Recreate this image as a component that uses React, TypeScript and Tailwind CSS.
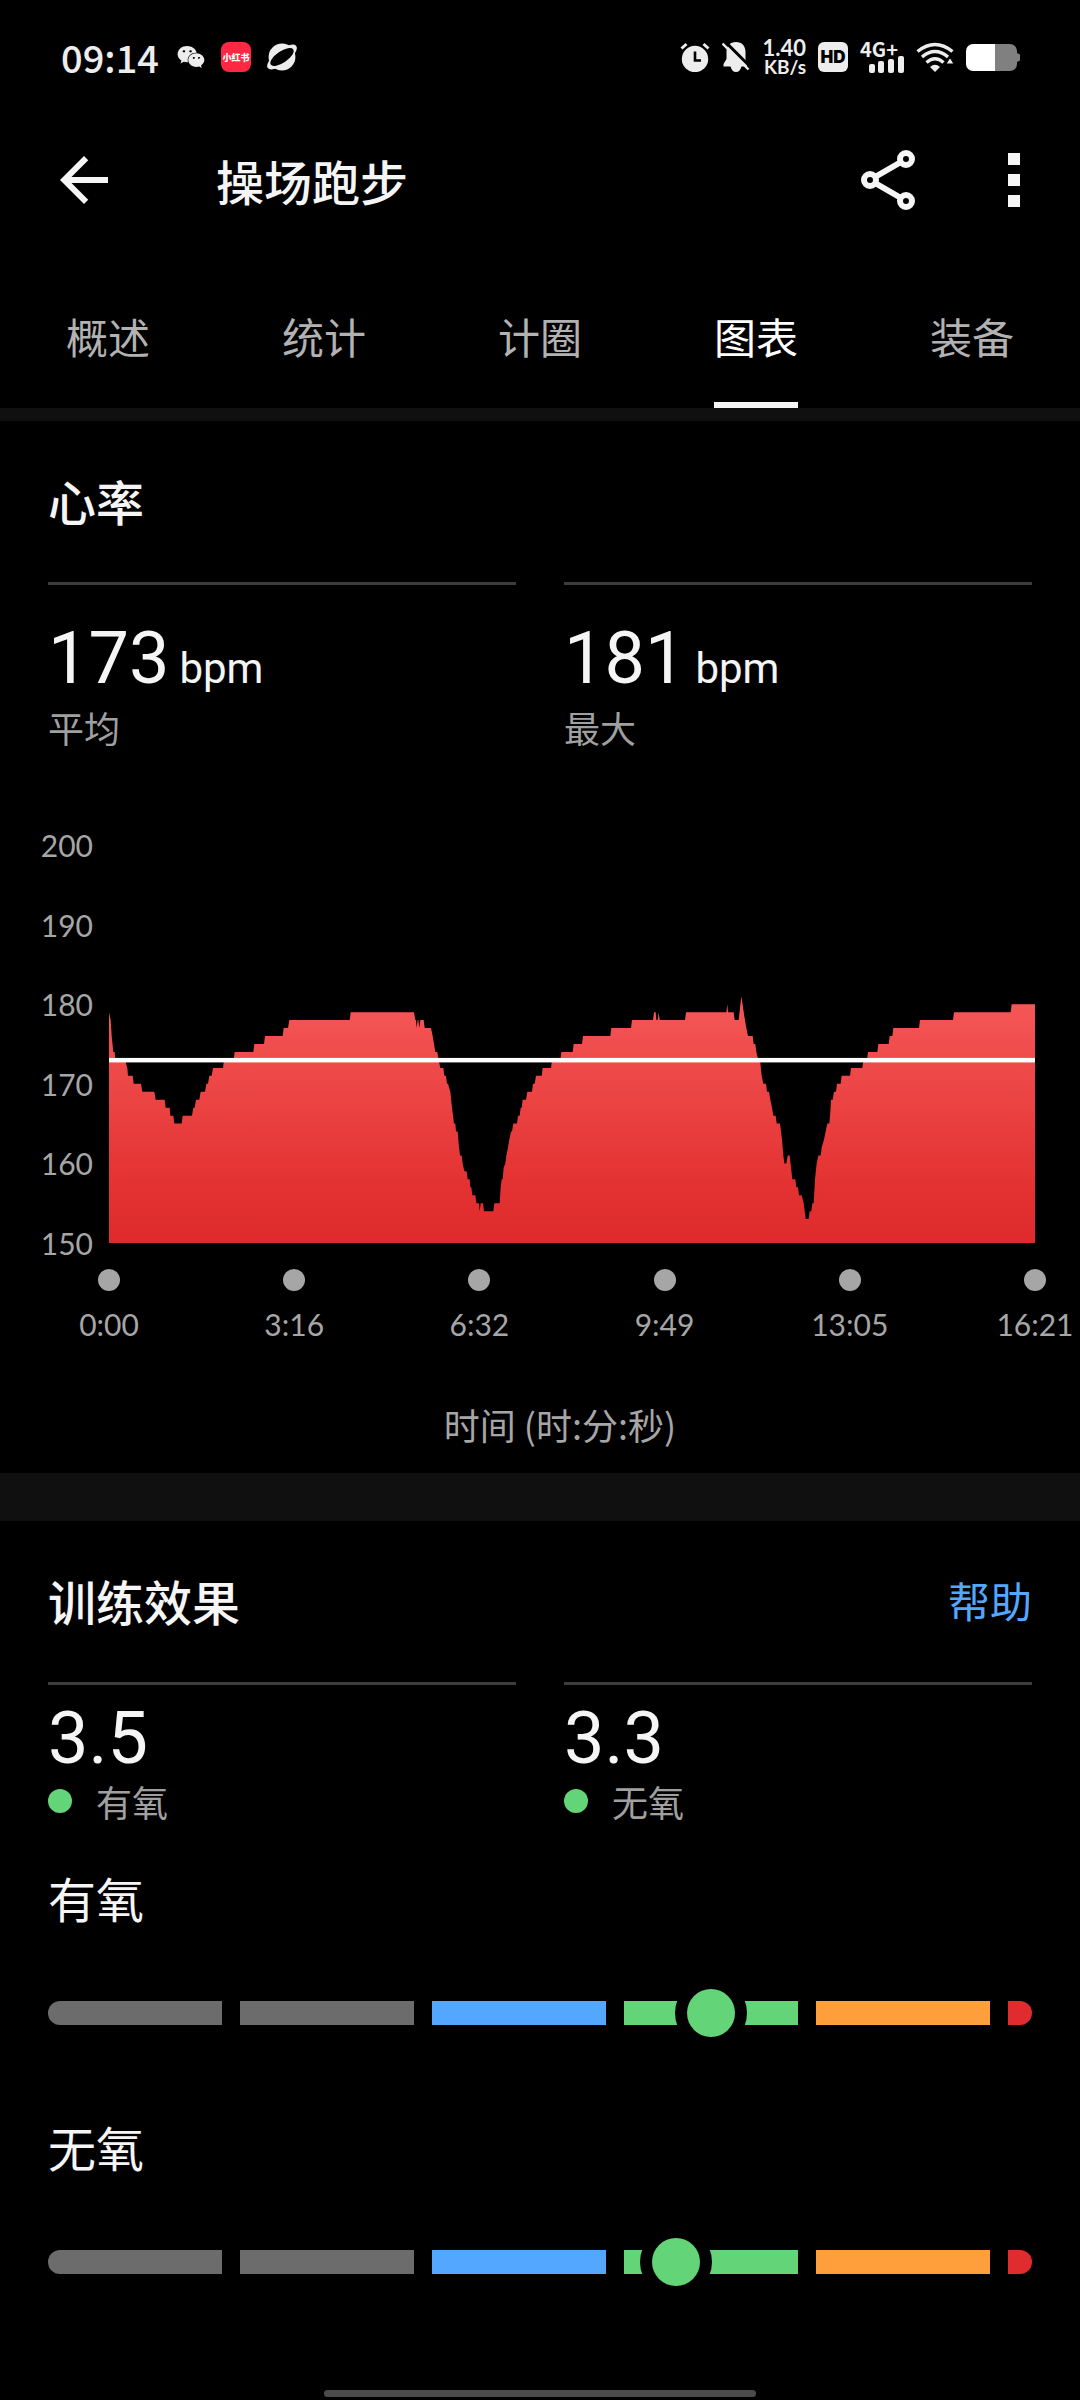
import React, { useState } from "react";
import { FaWeixin } from "react-icons/fa";
import { MdArrowBack } from "react-icons/md";

interface TickLabel {
  time: string;
}

interface StatProps {
  value: string;
  unit?: string;
  label: string;
}

interface EffectProps {
  title: string;
  value: number;
}

const TABS = ["概述", "统计", "计圈", "图表", "装备"];
const BPM_TICKS = [200, 190, 180, 170, 160, 150];
const TIME_TICKS: TickLabel[] = [
  { time: "0:00" },
  { time: "3:16" },
  { time: "6:32" },
  { time: "9:49" },
  { time: "13:05" },
  { time: "16:21" },
];

const MIN_BPM = 150;
const MAX_BPM = 200;
const AVG_BPM = 173;
const CHART_W = 2778;
const CHART_H = 398;

// [offset, bpm]
const HEART_RATE: [number, number][] = [
  [0, 179], [5, 178], [8, 176], [13, 174], [17, 174], [19, 173], [48, 173], [55, 172], [57, 171], [71, 171],
  [74, 170], [96, 170], [100, 169], [136, 169], [140, 168], [167, 168], [170, 167], [182, 167], [184, 166], [193, 166],
  [196, 165], [218, 165], [221, 166], [249, 166], [253, 167], [257, 167], [261, 168], [271, 168], [275, 169], [288, 169],
  [292, 170], [297, 170], [301, 171], [308, 171], [312, 172], [342, 172], [345, 173], [374, 173], [377, 174], [433, 174],
  [436, 175], [465, 175], [468, 176], [521, 176], [524, 177], [537, 177], [541, 178], [722, 178], [725, 179], [915, 179],
  [919, 178], [921, 178], [923, 177], [926, 178], [928, 178], [931, 177], [934, 178], [944, 178], [947, 177], [966, 177],
  [971, 176], [975, 175], [979, 174], [985, 174], [989, 173], [994, 172], [1003, 172], [1006, 171], [1011, 171], [1014, 170],
  [1017, 170], [1024, 169], [1029, 167], [1032, 166], [1035, 165], [1039, 165], [1041, 164], [1046, 164], [1049, 162.5], [1053, 161],
  [1058, 161], [1061, 160], [1066, 159], [1073, 159], [1076, 158], [1082, 158], [1084, 157], [1087, 157], [1090, 156], [1099, 156],
  [1102, 155], [1110, 155], [1112, 154], [1115, 155], [1122, 155], [1125, 154], [1153, 154], [1156, 155], [1172, 155], [1175, 157],
  [1178, 158], [1181, 158], [1184, 159.5], [1189, 160], [1192, 161], [1197, 162], [1201, 163], [1206, 164], [1209, 164], [1213, 165],
  [1224, 165], [1227, 166], [1232, 166], [1235, 167], [1238, 167], [1241, 168], [1251, 168], [1255, 169], [1269, 169], [1272, 170],
  [1277, 170], [1281, 171], [1298, 171], [1301, 172], [1326, 172], [1329, 173], [1354, 173], [1357, 174], [1391, 174], [1394, 175],
  [1419, 175], [1422, 176], [1504, 176], [1507, 177], [1566, 177], [1569, 178], [1632, 178], [1635, 179], [1640, 179], [1642, 178],
  [1646, 178], [1649, 179], [1652, 178], [1728, 178], [1731, 179], [1852, 179], [1855, 180], [1857, 179], [1874, 179], [1877, 178],
  [1889, 178], [1897, 181], [1906, 178.5], [1912, 177], [1917, 176], [1931, 176], [1934, 175], [1939, 175], [1942, 174], [1948, 173],
  [1953, 173], [1958, 171], [1963, 170], [1971, 170], [1974, 169], [1980, 169], [1984, 168], [1989, 167], [1993, 166], [2000, 166],
  [2003, 165], [2013, 165], [2019, 163], [2023, 161], [2026, 160], [2032, 160], [2036, 161], [2042, 161], [2046, 159.5], [2050, 158],
  [2059, 158], [2062, 157], [2067, 157], [2070, 156], [2078, 156], [2084, 155], [2090, 153], [2099, 153], [2102, 154], [2107, 154],
  [2110, 155], [2114, 155], [2118, 158], [2123, 160], [2128, 161], [2135, 161], [2138, 162], [2145, 163], [2150, 164], [2155, 165],
  [2161, 165], [2164, 166.5], [2166, 168], [2171, 168], [2175, 169], [2181, 169], [2184, 170], [2195, 170], [2198, 171], [2223, 171],
  [2226, 172], [2260, 172], [2263, 173], [2274, 173], [2277, 174], [2305, 174], [2308, 175], [2339, 175], [2342, 176], [2350, 176],
  [2353, 177], [2430, 177], [2433, 178], [2532, 178], [2535, 179], [2705, 179], [2708, 180], [2778, 180],
];

const bpmToY = (bpm: number) => ((MAX_BPM - bpm) / (MAX_BPM - MIN_BPM)) * CHART_H;

const areaPath = `M0 ${CHART_H} ${HEART_RATE.map(([x, bpm]) => `L${x} ${bpmToY(bpm)}`).join(" ")} L${CHART_W} ${CHART_H} Z`;

const StatusBar: React.FC = () => (
  <div className="flex h-[114px] items-center justify-between pl-[61px] pr-[60px] text-[#ededed]">
    <div className="flex items-center gap-4">
      <span className="mr-0.5 text-[38px] font-medium leading-[38px]">09:14</span>
      <FaWeixin className="h-7 w-7" />
      <span className="flex h-[30px] w-[30px] items-center justify-center rounded-lg bg-[#ff2842] text-[9px] font-black leading-none text-white">
        小红书
      </span>
      <svg className="h-[30px] w-[30px]" viewBox="0 0 30 30">
        <circle cx="15" cy="15" r="13.4" fill="currentColor" />
        <ellipse cx="15" cy="15" rx="18" ry="7" fill="currentColor" transform="rotate(-38 15 15)" />
        <ellipse cx="15" cy="15" rx="13.6" ry="5.6" fill="#000" transform="rotate(-34 15 15)" />
      </svg>
    </div>

    <div className="flex items-center gap-3">
      <svg className="h-[30px] w-[30px]" viewBox="0 0 30 30">
        <circle cx="15" cy="17" r="13.2" fill="currentColor" />
        <path d="M1.5 6.5 6.5 2M28.5 6.5 23.5 2" stroke="currentColor" strokeWidth="3" />
        <path d="M15 9.5V18.5H21" fill="none" stroke="#000" strokeWidth="2.6" />
      </svg>
      <svg className="h-[30px] w-7" viewBox="0 0 28 30">
        <path d="M14 0C8 0 4.500 4 4.500 10v7L1.500 22v2.500h7C9.500 28 11 30 14 30s4.500-2 5.500-5.500H25V22l-1.500-3V10C23.500 4 20 0 14 0Z" fill="currentColor" />
        <path d="M2 -1.500 30 26.500" stroke="#000" strokeWidth="3" />
        <path d="M.5 1.500 26.500 27.500" stroke="currentColor" strokeWidth="2.400" />
      </svg>
      <div className="flex w-11 flex-col items-end font-['Lato',sans-serif] font-bold">
        <span className="text-[22px] leading-[19px]">1.40</span>
        <span className="text-[19px] leading-[19px]">KB/s</span>
      </div>
      <span className="flex h-[30px] w-[30px] items-center justify-center rounded-md bg-[#ededed] font-['Inter',sans-serif] text-[17px] font-black leading-none text-black">
        HD
      </span>
      <div className="flex w-11 flex-col">
        <span className="text-[20px] font-bold leading-[15px]">4G+</span>
        <svg className="h-[17px] w-9 self-end" viewBox="0 0 36 17">
          <rect x="1" y="8" width="6" height="9" rx="2" fill="currentColor" />
          <rect x="10" y="5" width="6" height="12" rx="2" fill="currentColor" />
          <rect x="20" y="3" width="6" height="14" rx="2" fill="currentColor" />
          <rect x="30" y="0" width="6" height="17" rx="2" fill="currentColor" />
        </svg>
      </div>
      <svg className="h-[30px] w-[38px]" viewBox="0 0 38 30">
        <g fill="none" stroke="currentColor" strokeWidth="3.4">
          <path d="M1.500 9.500Q19 -4.500 36.500 9.500" />
          <path d="M6 15Q19 4 32 15" />
          <path d="M10.500 20.500Q19 13 27.500 20.500" />
        </g>
        <path d="M14 25Q19 20.500 24 25L19 30Z" fill="currentColor" />
        <path d="M34 15.500 38 22H30Z" fill="currentColor" stroke="#000" strokeWidth="1" />
      </svg>
      <svg className="h-[27px] w-[54px]" viewBox="0 0 54 27">
        <path d="M29 0H44a7 7 0 0 1 7 7v2l3 1.500v6L51 18v2a7 7 0 0 1-7 7H29Z" fill="#808080" />
        <path d="M7 0H29V27H7a7 7 0 0 1-7-7V7a7 7 0 0 1 7-7Z" fill="#fff" />
      </svg>
    </div>
  </div>
);

const Stat: React.FC<StatProps> = ({ value, unit, label }) => (
  <div className="flex-1 border-t-3 border-[#3c3c3c] pt-[38px]">
    <p className="font-['Roboto',sans-serif] text-[72px] leading-[72px]">
      {value}
      <span className="ml-2.5 text-[42px] leading-none">{unit}</span>
    </p>
    <p className="mt-[14px] text-4xl leading-9 text-[#a0a0a0]">{label}</p>
  </div>
);

const EffectStat: React.FC<StatProps> = ({ value, label }) => (
  <div className="flex-1 border-t-3 border-[#3c3c3c] pt-[18px]">
    <p className="font-['Roboto',sans-serif] text-[72px] leading-[72px]">{value}</p>
    <div className="mt-2 flex items-center gap-6">
      <span className="h-6 w-6 rounded-full bg-[#63d478]" />
      <span className="text-4xl leading-9 text-[#a0a0a0]">{label}</span>
    </div>
  </div>
);

const HeartRateChart: React.FC = () => (
  <div className="mt-[84px] font-['Lato',sans-serif] text-[30px] leading-8 text-[#a6a6a6]">
    <div className="flex gap-4 pr-[45px]">
      <div className="flex w-[93px] flex-col items-end justify-between">
        {BPM_TICKS.map((bpm) => (
          <span key={bpm}>{bpm}</span>
        ))}
      </div>
      <svg className="my-4 h-[398px] min-w-0 flex-1" viewBox={`0 0 ${CHART_W} ${CHART_H}`} preserveAspectRatio="none">
        <defs>
          <linearGradient id="hr" x1="0" y1="0" x2="0" y2="1">
            <stop offset="0" stopColor="#f55858" />
            <stop offset="0.800" stopColor="#e33030" />
            <stop offset="1" stopColor="#df2b2d" />
          </linearGradient>
        </defs>
        <path d={areaPath} fill="url(#hr)" />
        <rect x="0" y={bpmToY(AVG_BPM) - 2} width={CHART_W} height="4.500" fill="#fff" />
      </svg>
    </div>
    <div className="mt-[10px] flex justify-between pl-[109px] pr-[45px]">
      {TIME_TICKS.map(({ time }) => (
        <div key={time} className="flex w-0 flex-col items-center gap-[17px] whitespace-nowrap">
          <span className="h-[22px] w-[22px] shrink-0 rounded-full bg-[#a6a6a6]" />
          <span>{time}</span>
        </div>
      ))}
    </div>
  </div>
);

const EffectBar: React.FC<EffectProps> = ({ title, value }) => (
  <div>
    <h3 className="text-5xl leading-[48px]">{title}</h3>
    <div role="meter" aria-label={title} aria-valuemin={0} aria-valuemax={5} aria-valuenow={value} className="mt-20 flex h-6 gap-[18px]">
      <div className="flex-1 rounded-l-full bg-[#6c6c6c]" />
      <div className="flex-1 bg-[#6c6c6c]" />
      <div className="flex-1 bg-[#54a7ff]" />
      <div className="relative flex-1 bg-[#63d478]">
        <span
          className="absolute top-1/2 h-12 w-12 -translate-x-1/2 -translate-y-1/2 rounded-full bg-[#63d478] ring-12 ring-black"
          style={{ left: `${(value - 3) * 100}%` }}
        />
      </div>
      <div className="flex-1 bg-[#ff9f3c]" />
      <div className="w-6 rounded-r-full bg-[#e12c2f]" />
    </div>
  </div>
);

const App: React.FC = () => {
  const [tab, setTab] = useState("图表");

  return (
    <div className="flex min-h-screen flex-col bg-black font-['Noto_Sans_CJK_SC',sans-serif] text-[#f5f5f5]">
      <StatusBar />

      <header className="flex h-[132px] items-center pl-12 pr-[30px]">
        <button aria-label="返回">
          <MdArrowBack className="h-[72px] w-[72px]" />
        </button>
        <h1 className="ml-24 flex-1 text-5xl font-medium leading-[48px]">操场跑步</h1>
        <button aria-label="分享" className="mr-[54px]">
          <svg className="h-[72px] w-[72px]" viewBox="0 0 72 72" fill="none" stroke="currentColor" strokeWidth="6">
            <circle cx="18" cy="36" r="6" />
            <circle cx="54" cy="15" r="6" />
            <circle cx="54" cy="57" r="6" />
            <path d="M23 33 49 18M23 39 49 54" />
          </svg>
        </button>
        <button aria-label="更多" className="flex h-[72px] w-[72px] flex-col items-center justify-center gap-[9px]">
          <span className="h-3 w-3 bg-current" />
          <span className="h-3 w-3 bg-current" />
          <span className="h-3 w-3 bg-current" />
        </button>
      </header>

      <nav className="flex h-[162px]">
        {TABS.map((name) => (
          <button key={name} onClick={() => setTab(name)} className="flex flex-1 flex-col items-center">
            <span className={name === tab ? "flex flex-1 items-center pt-6 text-[42px] leading-[42px] text-white" : "flex flex-1 items-center pt-6 text-[42px] leading-[42px] text-[#b2b2b2]"}>
              {name}
            </span>
            <span className={name === tab ? "h-1.5 w-[84px] bg-[#f5f5f5]" : "h-1.5 w-[84px]"} />
          </button>
        ))}
      </nav>
      <div className="h-[13px] bg-[#101010]" />

      <section className="pb-[31px] pt-[55px]">
        <div className="px-12">
          <h2 className="text-5xl font-medium leading-[48px]">心率</h2>
          <div className="mt-[58px] flex gap-12">
            <Stat value="173" unit="bpm" label="平均" />
            <Stat value="181" unit="bpm" label="最大" />
          </div>
        </div>
        <HeartRateChart />
        <p className="mt-[66px] pl-10 text-center text-4xl leading-9 text-[#a6a6a6]">时间 (时:分:秒)</p>
      </section>
      <div className="h-12 bg-[#101010]" />

      <section className="px-12 pt-[55px]">
        <div className="flex items-center justify-between">
          <h2 className="text-5xl font-medium leading-[48px]">训练效果</h2>
          <a href="#help" className="text-[42px] leading-[42px] text-[#54a7ff]">帮助</a>
        </div>
        <div className="mt-[58px] flex gap-12">
          <EffectStat value="3.5" label="有氧" />
          <EffectStat value="3.3" label="无氧" />
        </div>
        <div className="mt-[54px] flex flex-col gap-[97px]">
          <EffectBar title="有氧" value={3.5} />
          <EffectBar title="无氧" value={3.3} />
        </div>
      </section>

      <div className="mt-auto flex justify-center pb-[3px]">
        <div className="h-[7px] w-2/5 rounded-full bg-[#4b4b4b]" />
      </div>
    </div>
  );
};

export default App;
